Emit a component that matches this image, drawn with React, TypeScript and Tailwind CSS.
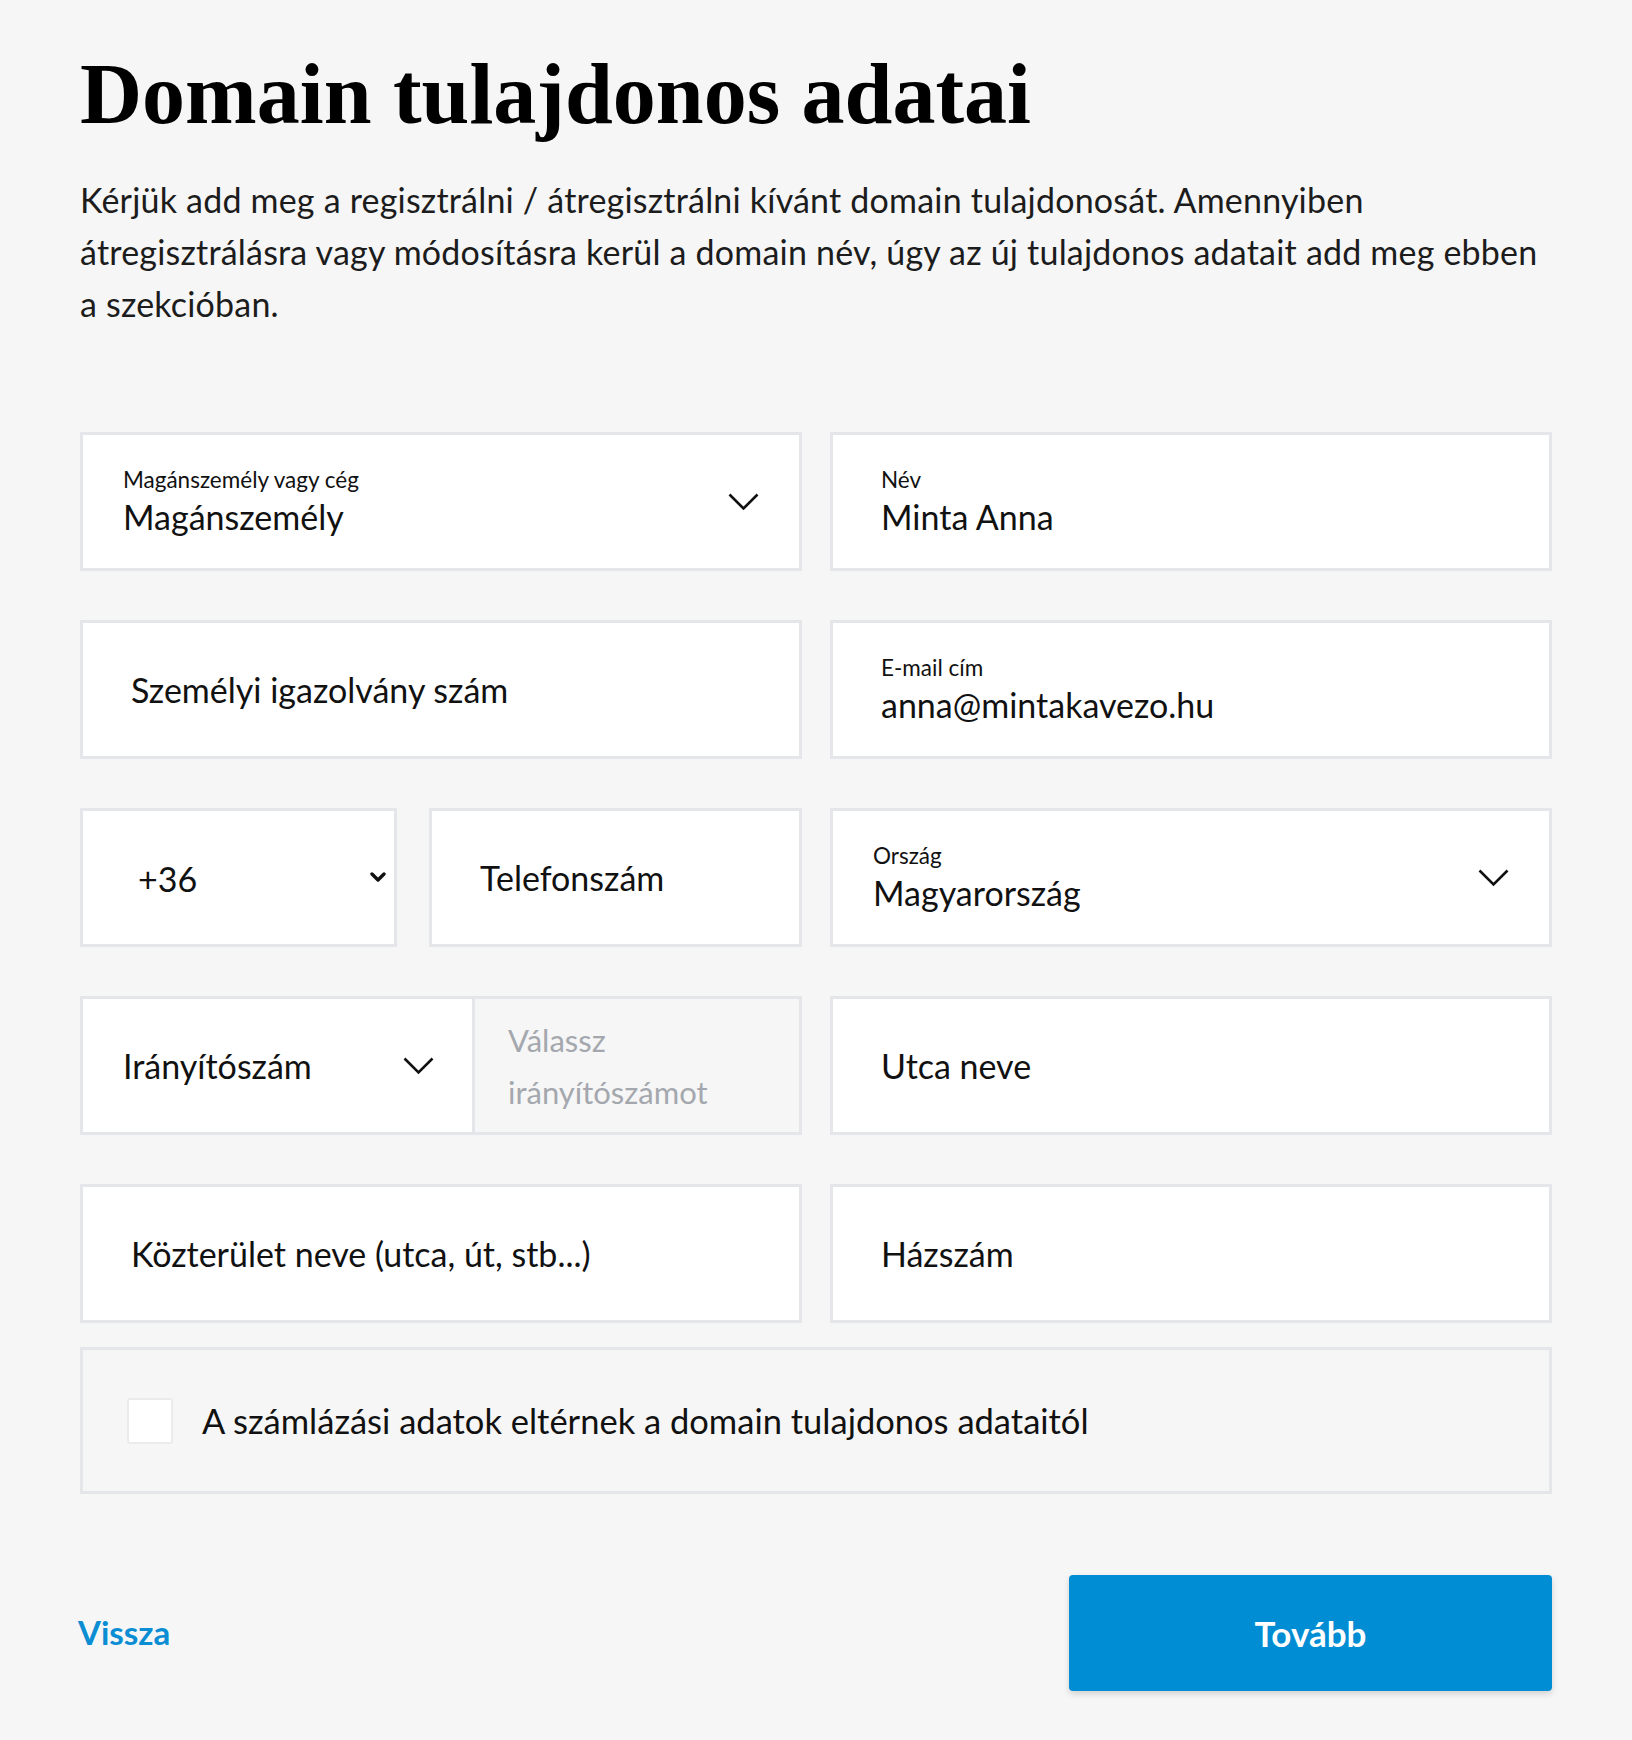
import React from 'react';

const sans = "font-['Lato',sans-serif]";

function Chevron() {
  return (
    <svg width="31" height="18" viewBox="0 0 31 18" fill="none" className="shrink-0">
      <path d="M1.5 1.5 L15.5 15.5 L29.5 1.5" stroke="#111" strokeWidth="2.6" />
    </svg>
  );
}

function SmallChevron() {
  return (
    <svg width="16" height="11" viewBox="0 0 16 11" fill="none" className="shrink-0">
      <path d="M2 2 L8 8 L14 2" stroke="#111" strokeWidth="3.4" strokeLinecap="round" strokeLinejoin="round" />
    </svg>
  );
}

function LabeledSelect({ label, value }: { label: string; value: string }) {
  return (
    <div className="h-[139px] bg-white border-[3px] border-[#e5e6ea] flex items-center justify-between pl-[40px] pr-[40px]">
      <div className="flex flex-col">
        <span className="text-[22.5px] leading-[26px] text-[#111]">{label}</span>
        <span className="text-[34px] leading-[40px] mt-[4px] text-[#111]">{value}</span>
      </div>
      <Chevron />
    </div>
  );
}

function LabeledInput({ label, value }: { label: string; value: string }) {
  return (
    <div className="h-[139px] bg-white border-[3px] border-[#e5e6ea] flex items-center pl-[48px]">
      <div className="flex flex-col">
        <span className="text-[22.5px] leading-[26px] text-[#111]">{label}</span>
        <span className="text-[34px] leading-[40px] mt-[4px] text-[#111]">{value}</span>
      </div>
    </div>
  );
}

function Input({ placeholder }: { placeholder: string }) {
  return (
    <div className="h-[139px] bg-white border-[3px] border-[#e5e6ea] flex items-center pl-[48px]">
      <span className="text-[34px] leading-[40px] text-[#111]">{placeholder}</span>
    </div>
  );
}

export default function App() {
  return (
    <div className={`min-h-[1740px] bg-[#f6f6f6] px-[80px] pt-[51px] pb-[48px] ${sans}`}>
      {/* Heading */}
      <h1 className="font-['Liberation_Serif',serif] font-bold text-[86px] leading-[86px] text-black">
        Domain tulajdonos adatai
      </h1>
      <p className="mt-[37px] text-[34px] leading-[52px] tracking-[0.2px] text-[#1c1c1c]">
        Kérjük add meg a regisztrálni / átregisztrálni kívánt domain tulajdonosát. Amennyiben
        <br />
        átregisztrálásra vagy módosításra kerül a domain név, úgy az új tulajdonos adatait add meg ebben
        <br />
        a szekcióban.
      </p>

      {/* Form */}
      <div className="mt-[102px] grid grid-cols-2 gap-x-[28px] gap-y-[49px]">
        <LabeledSelect label="Magánszemély vagy cég" value="Magánszemély" />
        <LabeledInput label="Név" value="Minta Anna" />

        <Input placeholder="Személyi igazolvány szám" />
        <LabeledInput label="E-mail cím" value="anna@mintakavezo.hu" />

        <div className="grid grid-cols-[317px_1fr] gap-x-[32px]">
          <div className="h-[139px] bg-white border-[3px] border-[#e5e6ea] flex items-center justify-between pl-[55px] pr-[8px]">
            <span className="text-[34px] leading-[40px] text-[#111] mt-[2px]">+36</span>
            <SmallChevron />
          </div>
          <Input placeholder="Telefonszám" />
        </div>
        <LabeledSelect label="Ország" value="Magyarország" />

        <div className="h-[139px] border-[3px] border-[#e5e6ea] flex">
          <div className="w-[392px] bg-white border-r-[3px] border-[#e5e6ea] flex items-center justify-between pl-[40px] pr-[38px]">
            <span className="text-[34px] leading-[40px] text-[#111]">Irányítószám</span>
            <Chevron />
          </div>
          <div className="flex-1 bg-[#f6f6f6] flex items-center pl-[33px] pr-[10px]">
            <span className="text-[31px] leading-[52px] text-[#a4a8ae]">Válassz irányítószámot</span>
          </div>
        </div>
        <Input placeholder="Utca neve" />

        <Input placeholder="Közterület neve (utca, út, stb...)" />
        <Input placeholder="Házszám" />
      </div>

      {/* Checkbox */}
      <div className="mt-[24px] h-[147px] border-[3px] border-[#e5e6ea] flex items-center pl-[44px]">
        <div className="w-[46px] h-[46px] bg-white border-[2px] border-[#ebebeb] rounded-[3px] shrink-0" />
        <span className="ml-[29px] text-[34.5px] leading-[40px] text-[#111]">
          A számlázási adatok eltérnek a domain tulajdonos adataitól
        </span>
      </div>

      {/* Footer */}
      <div className="mt-[81px] flex items-center justify-between">
        <a href="#" className="text-[33px] font-bold text-[#0a8dd3] -ml-[2px]">
          Vissza
        </a>
        <button className="w-[483px] h-[116px] bg-[#008dd4] rounded-[4px] shadow-[0_3px_6px_rgba(0,0,0,0.15)] text-white text-[35px] font-bold">
          Tovább
        </button>
      </div>
    </div>
  );
}
